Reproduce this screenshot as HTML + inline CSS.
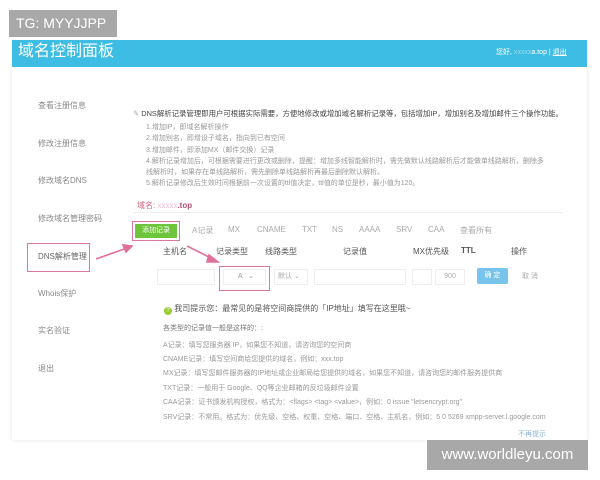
<!DOCTYPE html>
<html><head><meta charset="utf-8"><style>
*{margin:0;padding:0;box-sizing:border-box}
body{width:600px;height:480px;background:#fff;position:relative;overflow:hidden;font-family:"Liberation Sans","Noto Sans CJK SC",sans-serif;color:#666}
.a{position:absolute;white-space:nowrap}
.panel{position:absolute;left:12px;top:66px;width:575px;height:374px;background:#fff;box-shadow:0 0 4px #e4e4e4}
.side{font-size:8px;color:#888}
.t{font-size:7px;color:#999}
</style></head><body>
<div class="panel"></div>
<div class="a" style="left:12px;top:40px;width:575px;height:27px;background:#3dbde3"></div>
<div class="a" style="left:18px;top:42px;font-size:16px;color:#fff;line-height:20px">域名控制面板</div>
<div class="a" style="left:496px;top:47px;font-size:7px;color:#fff">您好, <span style="color:#9ad9ee">xxxxx</span>a.top | <u>退出</u></div>
<div class="a" style="left:9px;top:10px;width:108px;height:27px;background:#a8a8a8;color:#fff;font-size:14px;line-height:27px;padding-left:7px">TG: MYYJJPP</div>

<div class="a side" style="left:38px;top:100px">查看注册信息</div>
<div class="a side" style="left:38px;top:138px">修改注册信息</div>
<div class="a side" style="left:38px;top:175px">修改域名DNS</div>
<div class="a side" style="left:38px;top:213px">修改域名管理密码</div>
<div class="a" style="left:27px;top:243px;width:63px;height:29px;border:1.5px solid #d9779f"></div>
<div class="a side" style="left:38px;top:251px;color:#666">DNS解析管理</div>
<div class="a side" style="left:38px;top:288px">Whois保护</div>
<div class="a side" style="left:38px;top:325px">实名验证</div>
<div class="a side" style="left:38px;top:363px">退出</div>

<div class="a" style="left:133px;top:108px;font-size:7.4px;color:#444"><span style="color:#aaa">✎</span> DNS解析记录管理即用户可根据实际需要，方便地修改或增加域名解析记录等，包括增加IP，增加别名及增加邮件三个操作功能。</div>
<div class="a t" style="left:146px;top:122px;line-height:11.3px;font-size:7px">1.增加IP，即域名解析操作<br>2.增加别名，即增设子域名，指向到已有空间<br>3.增加邮件，即添加MX（邮件交换）记录<br>4.解析记录增加后，可根据需要进行更改或删除，提醒：增加多线智能解析时，需先做默认线路解析后才能做单线路解析，删除多<br>线解析时，如果存在单线路解析，需先删除单线路解析再最后删除默认解析。<br>5.解析记录修改后生效时间根据前一次设置的ttl值决定，ttl值的单位是秒，最小值为120。</div>
<div class="a" style="left:137px;top:200px;font-size:8px;color:#d0607f">域名: <span style="color:#f0c0d0">xxxxx</span><b style="color:#b05070">.top</b></div>
<div class="a" style="left:133px;top:212px;width:430px;border-top:1px solid #eee"></div>
<div class="a" style="left:132px;top:221px;width:48px;height:20px;border:1.5px solid #d9779f;padding:2px"><div style="background:#6cc53a;height:100%;color:#fff;font-size:7px;text-align:center;line-height:13px">添加记录</div></div>
<div class="a t" style="left:192px;top:225px;font-size:8px;color:#aaa">A记录</div>
<div class="a t" style="left:228px;top:225px;font-size:8px;color:#aaa">MX</div>
<div class="a t" style="left:257px;top:225px;font-size:8px;color:#aaa">CNAME</div>
<div class="a t" style="left:302px;top:225px;font-size:8px;color:#aaa">TXT</div>
<div class="a t" style="left:332px;top:225px;font-size:8px;color:#aaa">NS</div>
<div class="a t" style="left:359px;top:225px;font-size:8px;color:#aaa">AAAA</div>
<div class="a t" style="left:396px;top:225px;font-size:8px;color:#aaa">SRV</div>
<div class="a t" style="left:428px;top:225px;font-size:8px;color:#aaa">CAA</div>
<div class="a t" style="left:460px;top:225px;font-size:8px;color:#aaa">查看所有</div>

<div class="a" style="left:163px;top:246px;font-size:8px;color:#555">主机名</div>
<div class="a" style="left:216px;top:246px;font-size:8px;color:#555">记录类型</div>
<div class="a" style="left:265px;top:246px;font-size:8px;color:#555">线路类型</div>
<div class="a" style="left:343px;top:246px;font-size:8px;color:#555">记录值</div>
<div class="a" style="left:413px;top:246px;font-size:8px;color:#555">MX优先级</div>
<div class="a" style="left:461px;top:246px;font-size:8px;color:#555;font-weight:bold">TTL</div>
<div class="a" style="left:511px;top:246px;font-size:8px;color:#555">操作</div>

<div class="a" style="left:157px;top:269px;width:58px;height:16px;border:1px solid #eee"></div>
<div class="a" style="left:219px;top:266px;width:51px;height:25px;border:1.5px solid #d9779f"></div>
<div class="a" style="left:223px;top:269px;width:43px;height:16px;border:1px solid #eee;font-size:7px;color:#999;line-height:14px;padding-left:14px">A &nbsp;&nbsp;⌄</div>
<div class="a" style="left:274px;top:269px;width:34px;height:16px;border:1px solid #eee;font-size:7px;color:#aaa;line-height:14px;padding-left:3px">默认 ⌄</div>
<div class="a" style="left:314px;top:269px;width:92px;height:16px;border:1px solid #eee"></div>
<div class="a" style="left:412px;top:269px;width:20px;height:16px;border:1px solid #eee"></div>
<div class="a" style="left:435px;top:269px;width:30px;height:16px;border:1px solid #eee;font-size:7px;color:#aaa;line-height:14px;text-align:center">900</div>
<div class="a" style="left:477px;top:268px;width:31px;height:16px;background:#79c4ec;color:#fff;font-size:7px;line-height:16px;text-align:center;border-radius:2px">确 定</div>
<div class="a" style="left:522px;top:271px;font-size:7px;color:#aaa">取 消</div>

<svg class="a" style="left:0;top:0" width="600" height="480"><g stroke="#e0709a" stroke-width="1.6" fill="#e0709a">
<line x1="96" y1="259" x2="127" y2="248"/><polygon points="132,246 123,245 126,252"/>
<line x1="187" y1="246" x2="213" y2="259"/><polygon points="218,262 209,255 207,262"/></g></svg>

<div class="a" style="left:164px;top:303px;font-size:8px;color:#555"><span style="display:inline-block;width:8px;height:8px;border-radius:50%;background:#9c3;color:#fff;font-size:6px;text-align:center;line-height:8px;vertical-align:-1px">?</span> 我司提示您：最常见的是将空间商提供的「IP地址」填写在这里哦~</div>
<div class="a t" style="left:163px;top:323px;font-size:7px;color:#777">各类型的记录值一般是这样的：:</div>
<div class="a t" style="left:163px;top:340px">A记录：填写您服务器 IP，如果您不知道，请咨询您的空间商</div>
<div class="a t" style="left:163px;top:354px">CNAME记录：填写空间商给您提供的域名，例如：xxx.top</div>
<div class="a t" style="left:163px;top:368px">MX记录：填写您邮件服务器的IP地址或企业邮局给您提供的域名，如果您不知道，请咨询您的邮件服务提供商</div>
<div class="a t" style="left:163px;top:383px">TXT记录：一般用于 Google、QQ等企业邮箱的反垃圾邮件设置</div>
<div class="a t" style="left:163px;top:397px">CAA记录：证书颁发机构授权，格式为：&lt;flags&gt; &lt;tag&gt; &lt;value&gt;，例如：0 issue "letsencrypt.org"</div>
<div class="a t" style="left:163px;top:412px">SRV记录：不常用。格式为：优先级、空格、权重、空格、端口、空格、主机名，例如：5 0 5269 xmpp-server.l.google.com</div>
<div class="a t" style="left:518px;top:429px;color:#8ab4d8">不再提示</div>

<div class="a" style="left:427px;top:440px;width:161px;height:30px;background:#a8a8a8;color:#fff;font-size:15px;line-height:30px;text-align:center">www.worldleyu.com</div>
</body></html>
